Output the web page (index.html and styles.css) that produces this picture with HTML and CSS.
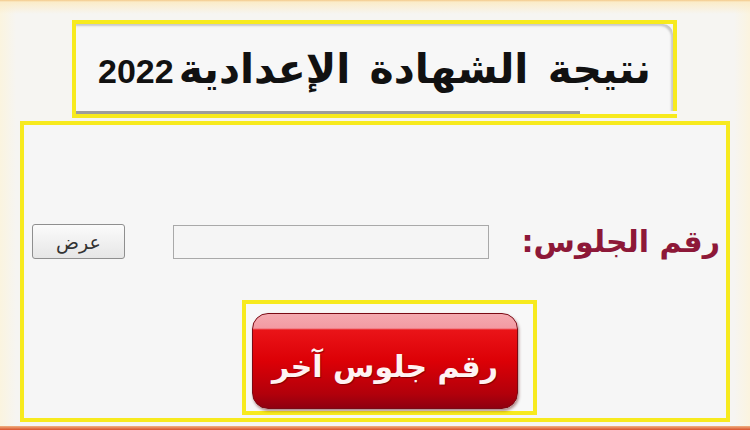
FILE: index.html
```html
<!DOCTYPE html>
<html lang="ar">
<head>
<meta charset="utf-8">
<link rel="stylesheet" href="styles.css">
</head>
<body>
<div class="page">
  <div class="title-frame">
    <div class="title-panel">
      <h1 class="title" dir="rtl"><span class="title-ar">نتيجة الشهادة الإعدادية</span> <span class="year">2022</span></h1>
    </div>
  </div>
  <div class="main-frame">
    <div class="field-row">
      <button class="show-btn" type="button">عرض</button>
      <input class="seat-input" type="text">
      <label class="seat-label" dir="rtl">رقم الجلوس:</label>
    </div>
    <div class="again-frame">
      <button class="again-btn" type="button"><span class="again-text" dir="rtl">رقم جلوس آخر</span></button>
    </div>
  </div>
  <div class="bottom-bar"></div>
</div>
</body>
</html>
```
FILE: styles.css
```css
html, body {
  margin: 0;
  padding: 0;
}
body {
  width: 750px;
  height: 430px;
  overflow: hidden;
  font-family: "DejaVu Sans", sans-serif;
}
.page {
  width: 750px;
  height: 430px;
  box-sizing: border-box;
  display: flex;
  flex-direction: column;
  background:
    linear-gradient(to bottom, #f3c98a 0, #fbecc9 2px, rgba(251,246,232,0) 14px),
    linear-gradient(to right, #fbf4df 0, #f6f5f2 16px, #f6f5f2 734px, #fbf4df 750px);
  padding-top: 20px;
}
.title-frame {
  margin-left: 72px;
  width: 605px;
  height: 98px;
  box-sizing: border-box;
  border: 4px solid #f7ea1e;
  background: #f5f5f5;
}
.title-panel {
  height: 100%;
  box-sizing: border-box;
  background: #f7f7f7;
  border-top-right-radius: 10px;
  box-shadow: inset -3px 3px 2px -1px #c9c9c9;
  border-bottom: 3px solid #9d9d9d;
  display: flex;
  align-items: center;
  justify-content: center;
  position: relative;
  padding-top: 4px;
}
.title-panel::after {
  content: "";
  position: absolute;
  right: -4px;
  bottom: -3px;
  width: 97px;
  height: 3px;
  background: #f7f7f7;
}
.title {
  margin: 0;
  font-weight: bold;
  color: #111;
  display: flex;
  align-items: baseline;
  gap: 5px;
}
.title-ar {
  font-family: "DejaVu Sans", sans-serif;
  font-size: 41px;
  word-spacing: 5px;
  line-height: 1;
}
.year {
  font-family: "Liberation Sans", Arial, sans-serif;
  font-weight: bold;
  font-size: 34px;
  line-height: 1;
}
.main-frame {
  margin: 3px 0 0 20px;
  width: 710px;
  height: 301px;
  box-sizing: border-box;
  border: 4px solid #f7ea1e;
  background: #f6f6f6;
  display: flex;
  flex-direction: column;
  padding-top: 99px;
}
.field-row {
  display: flex;
  align-items: center;
  padding: 0 6px 0 8px;
  height: 35px;
}
.show-btn {
  width: 93px;
  height: 35px;
  box-sizing: border-box;
  border: 1px solid #8f8f8f;
  border-radius: 3px;
  background: linear-gradient(to bottom, #fbfbfb, #e6e6e6);
  font-family: "DejaVu Sans", sans-serif;
  font-size: 19px;
  color: #333;
  padding: 0;
}
.seat-input {
  margin-left: 48px;
  width: 316px;
  height: 34px;
  box-sizing: border-box;
  border: 1px solid #a9a9a9;
  background: #f5f5f5;
}
.seat-label {
  margin-left: auto;
  font-family: "DejaVu Sans", sans-serif;
  font-weight: bold;
  font-size: 30px;
  color: #8d1838;
}
.again-frame {
  margin: 41px 0 0 218px;
  width: 295px;
  height: 115px;
  box-sizing: border-box;
  border: 4px solid #f7ea1e;
  background: #f8f8f8;
  padding: 9px 15px 2px 6px;
  display: flex;
}
.again-btn {
  flex: 1;
  border: 1px solid #7a0a14;
  border-radius: 16px;
  background: linear-gradient(to bottom, #f4aab0 0, #f39aa2 15%, #ea1418 17%, #dc0006 50%, #b2000b 85%, #8f0010 100%);
  box-shadow: 1px 2px 3px rgba(80, 0, 0, 0.45);
  display: flex;
  align-items: center;
  justify-content: center;
  padding: 10px 0 0 0;
}
.again-text {
  font-family: "DejaVu Sans", sans-serif;
  font-weight: bold;
  font-size: 30px;
  color: #fff3f3;
  text-shadow: 1px 1px 1px rgba(90, 0, 0, 0.6);
}
.bottom-bar {
  margin-top: auto;
  height: 4px;
  background: linear-gradient(to bottom, #f0b080, #d9532e);
}
```
